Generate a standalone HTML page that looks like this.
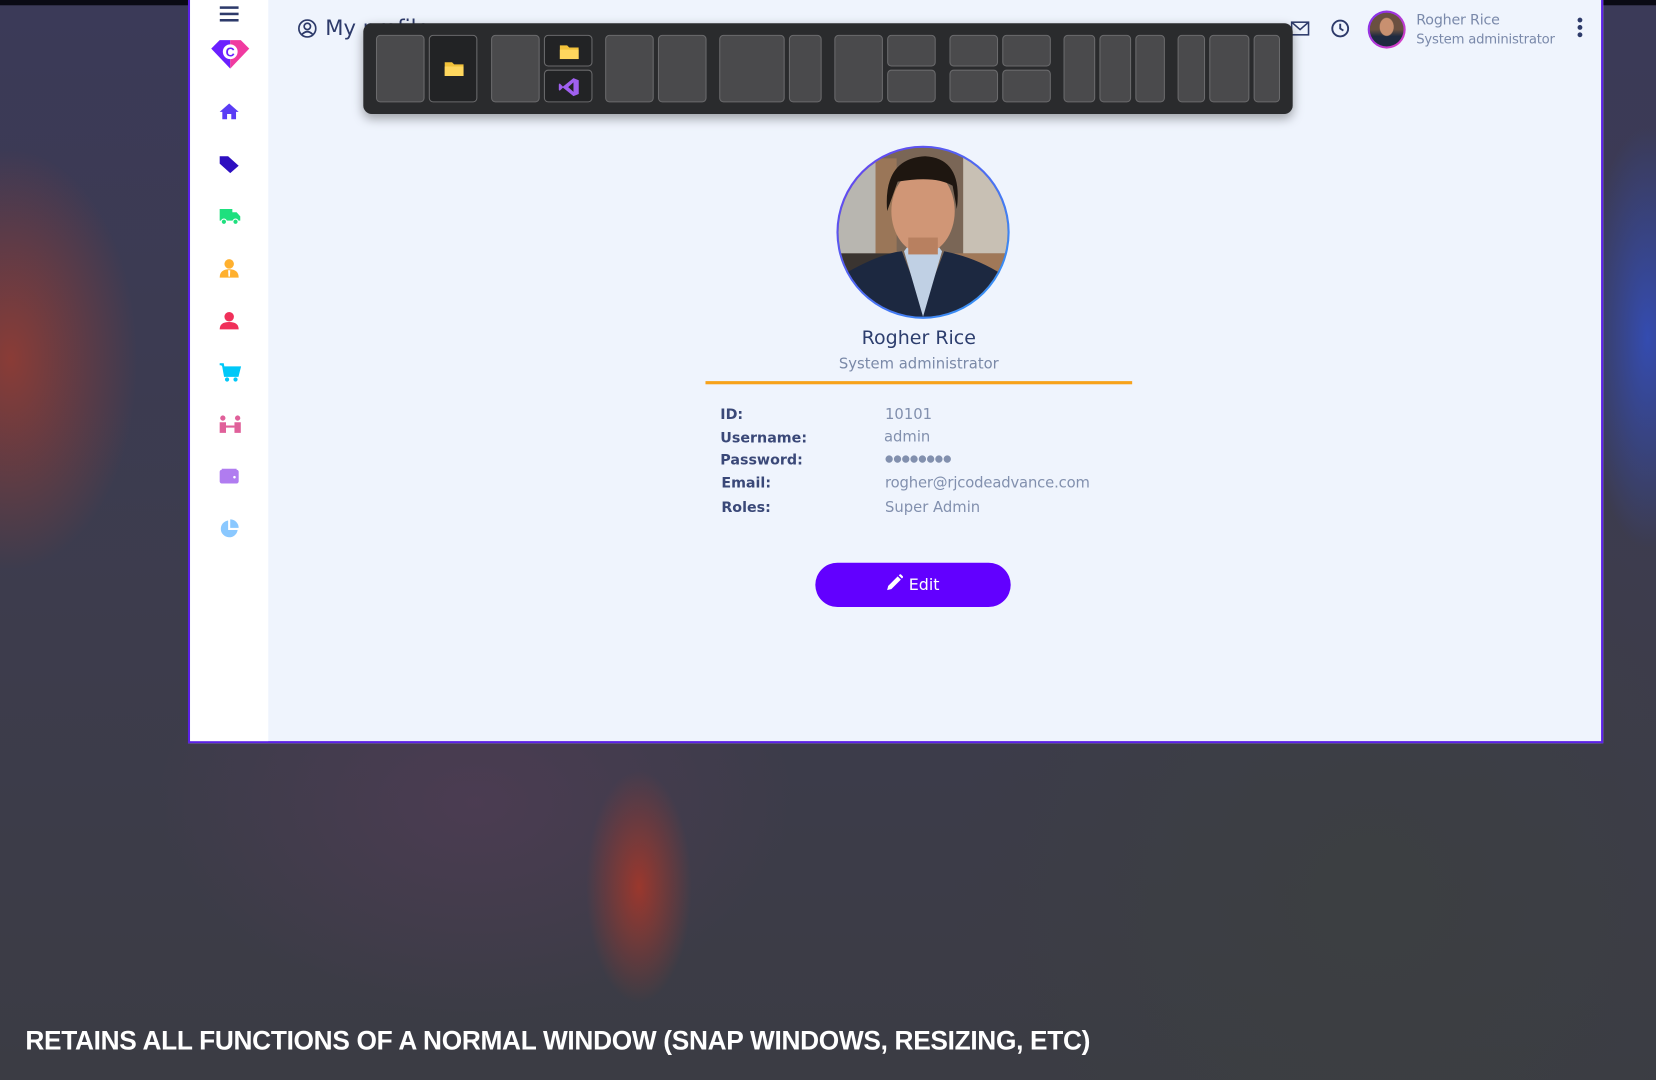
<!DOCTYPE html>
<html><head><meta charset="utf-8">
<style>
html,body{margin:0;padding:0;width:1656px;height:1080px;overflow:hidden;background:#3a3a47}
#s{position:absolute;left:0;top:0;width:1568px;height:1023px;transform:scale(1.05612,1.05572);transform-origin:0 0;font-family:"DejaVu Sans","Liberation Sans",sans-serif;
background:
radial-gradient(ellipse 120px 200px at 10px 340px,rgba(180,60,40,.65),transparent),
radial-gradient(ellipse 60px 200px at 1560px 320px,rgba(50,80,200,.8),transparent),
radial-gradient(ellipse 50px 110px at 605px 840px,rgba(170,55,40,.85),transparent),
radial-gradient(ellipse 300px 200px at 450px 760px,rgba(90,60,90,.5),transparent),
radial-gradient(ellipse 400px 400px at 1300px 850px,rgba(60,64,64,.8),transparent),
linear-gradient(180deg,#3b3a58 0%,#3d3c4c 60%,#3b3c44 100%);}
.win{position:absolute;left:178px;top:0;width:1336px;height:702px;border:2px solid #5b21e6;border-top:none;background:#eff4fd}
.side{position:absolute;left:0;top:0;width:74px;height:702px;background:#fff}
.ic{position:absolute;left:27px}
.pop{position:absolute;left:344px;top:22px;width:880px;height:86px;background:#2a2b2d;border-radius:8px;box-shadow:0 4px 10px rgba(0,0,0,.35)}
.t{position:absolute;background:#4a4a4c;border:1px solid #6a6a6c;border-radius:4px;box-sizing:border-box}
.d{background:#222325}
.lab{position:absolute;left:682px;font-weight:bold;font-size:13.5px;color:#3a4878;font-family:"DejaVu Sans",sans-serif}
.val{position:absolute;left:838px;font-size:14px;color:#8290ae}
</style></head><body><div id="s">
<div style="position:absolute;left:0;top:0;width:1568px;height:5px;background:#0a0a14"></div>
<div class="win">
 <div class="side">
  <svg class="ic" style="left:28px;top:5px" width="18" height="16" viewBox="0 0 18 16"><rect y="1" width="18" height="2.4" fill="#2d3a6a"/><rect y="7" width="18" height="2.4" fill="#2d3a6a"/><rect y="13" width="18" height="2.4" fill="#2d3a6a"/></svg>
  <svg style="position:absolute;left:18px;top:36px" width="40" height="30" viewBox="0 0 40 30"><path d="M2 10 L10 2 L20 2 L20 29 Z" fill="#6a1fff"/><path d="M38 10 L30 2 L20 2 L20 29 Z" fill="#f03aa0"/><circle cx="20" cy="13" r="7" fill="#fff"/><text x="20" y="17.5" text-anchor="middle" font-size="12" font-weight="bold" fill="#6a1fff" font-family="Liberation Sans">C</text></svg>
  <svg class="ic" style="top:97px" width="20" height="17" viewBox="0 0 20 17"><path d="M10 1 L19 9 L16.5 9 L16.5 16 L12 16 L12 11 L8 11 L8 16 L3.5 16 L3.5 9 L1 9 Z" fill="#5a3cf5"/></svg>
  <svg class="ic" style="top:147px" width="20" height="18" viewBox="0 0 20 18"><path d="M1 1 L9 1 L19 10 L11 17 L1 8 Z" fill="#2d0fc0"/></svg>
  <svg class="ic" style="top:197px" width="22" height="16" viewBox="0 0 22 16"><path d="M1 1 H13 V12 H1 Z M13 4 H17 L20.5 8 V12 H13 Z" fill="#1ee07e"/><circle cx="5" cy="13" r="2.5" fill="#1ee07e" stroke="#fff"/><circle cx="16" cy="13" r="2.5" fill="#1ee07e" stroke="#fff"/></svg>
  <svg class="ic" style="top:245px" width="20" height="19" viewBox="0 0 20 19"><circle cx="10" cy="5" r="4.5" fill="#ffb02e"/><path d="M1 18 Q1 10 10 10 Q19 10 19 18 Z" fill="#ffb02e"/><path d="M9 11 L11 11 L10.7 17 L9.3 17Z" fill="#fff"/></svg>
  <svg class="ic" style="top:295px" width="20" height="18" viewBox="0 0 20 18"><circle cx="10" cy="5" r="4.5" fill="#f0305a"/><path d="M1 17 Q1 10 10 10 Q19 10 19 17 Z" fill="#f0305a"/></svg>
  <svg class="ic" style="top:344px" width="22" height="18" viewBox="0 0 22 18"><path d="M1 1 H4 L6 12 H18 L20 4 H5" fill="#00c8f8" stroke="#00c8f8" stroke-width="2"/><circle cx="8" cy="15.5" r="2" fill="#00c8f8"/><circle cx="16" cy="15.5" r="2" fill="#00c8f8"/></svg>
  <svg class="ic" style="top:393px" width="22" height="18" viewBox="0 0 22 18"><circle cx="4" cy="3" r="2.5" fill="#e0609a"/><circle cx="18" cy="3" r="2.5" fill="#e0609a"/><path d="M1 7 H7 V17 H1Z M15 7 H21 V17 H15Z" fill="#e0609a"/><path d="M7 11 H15" stroke="#e0609a" stroke-width="2"/></svg>
  <svg class="ic" style="top:443px" width="20" height="16" viewBox="0 0 20 16"><rect x="1" y="2" width="18" height="13" rx="2" fill="#b07cf0"/><rect x="3" y="1" width="14" height="1.5" fill="#b07cf0"/><circle cx="15" cy="9" r="1.2" fill="#fff"/></svg>
  <svg class="ic" style="top:491px" width="20" height="20" viewBox="0 0 20 20"><path d="M9 2 A8 8 0 1 0 18 11 L9 11Z" fill="#8ac8ff"/><path d="M11 1 A8 8 0 0 1 19 9 L11 9Z" fill="#8ac8ff"/></svg>
 </div>
 <svg style="position:absolute;left:102px;top:18px" width="18" height="18" viewBox="0 0 18 18"><circle cx="9" cy="9" r="8" fill="none" stroke="#2d3a6a" stroke-width="1.6"/><circle cx="9" cy="7" r="3" fill="none" stroke="#2d3a6a" stroke-width="1.6"/><path d="M4 14.5 Q9 9.5 14 14.5" fill="none" stroke="#2d3a6a" stroke-width="1.6"/></svg>
 <div style="position:absolute;left:128px;top:14px;font-size:20px;color:#2d3a6a">My profile</div>
 <svg style="position:absolute;left:1042px;top:20px" width="18" height="14" viewBox="0 0 18 14"><rect x="1" y="1" width="16" height="12" fill="none" stroke="#2d3a6a" stroke-width="1.5"/><path d="M1 1 L9 8 L17 1" fill="none" stroke="#2d3a6a" stroke-width="1.5"/></svg>
 <svg style="position:absolute;left:1080px;top:18px" width="18" height="18" viewBox="0 0 18 18"><circle cx="9" cy="9" r="7.5" fill="none" stroke="#2d3a6a" stroke-width="1.8"/><path d="M9 4.5 V9 L12 11" fill="none" stroke="#2d3a6a" stroke-width="1.8"/></svg>
 <div style="position:absolute;left:1115px;top:10px;width:36px;height:36px;border-radius:50%;background:linear-gradient(135deg,#7a2ff0,#e040c0);"><div style="position:absolute;left:2px;top:2px;width:32px;height:32px;border-radius:50%;background:radial-gradient(ellipse 7px 9px at 50% 42%,#c89070 0 90%,transparent 100%),linear-gradient(180deg,#6a5040 0 50%,#1e2a40 70%)"></div></div>
 <div style="position:absolute;left:1161px;top:11px;font-size:13.5px;color:#7a89aa;line-height:17px;letter-spacing:-0.2px">Rogher Rice<br><span style="font-size:12.5px">System administrator</span></div>
 <svg style="position:absolute;left:1313px;top:16px" width="6" height="20" viewBox="0 0 6 20"><circle cx="3" cy="3" r="2.3" fill="#2d3a6a"/><circle cx="3" cy="10" r="2.3" fill="#2d3a6a"/><circle cx="3" cy="17" r="2.3" fill="#2d3a6a"/></svg>
</div>
<div class="pop">
 <div class="t" style="left:12px;top:11px;width:46px;height:64px"></div>
 <div class="t d" style="left:62px;top:11px;width:46px;height:64px"><svg style="position:absolute;left:14px;top:24px" width="18" height="14" viewBox="0 0 18 14"><path d="M0 1 H7 L9 3 H18 V14 H0Z" fill="#f2c23a"/><rect y="5" width="18" height="9" fill="#ffd75e"/></svg></div>
 <div class="t" style="left:121px;top:11px;width:46px;height:64px"></div>
 <div class="t d" style="left:171px;top:11px;width:46px;height:30px"><svg style="position:absolute;left:14px;top:8px" width="18" height="14" viewBox="0 0 18 14"><path d="M0 1 H7 L9 3 H18 V14 H0Z" fill="#f2c23a"/><rect y="5" width="18" height="9" fill="#ffd75e"/></svg></div>
 <div class="t d" style="left:171px;top:44px;width:46px;height:31px"><svg style="position:absolute;left:13px;top:6px" width="20" height="19" viewBox="0 0 20 19"><path d="M14 1 L19 3 V16 L14 18 L4 10 L1 13 L0 12 V7 L1 6 L4 9 Z M14 5 L9 9.5 L14 14Z" fill="#a060f0"/></svg></div>
 <div class="t" style="left:229px;top:11px;width:46px;height:64px"></div>
 <div class="t" style="left:279px;top:11px;width:46px;height:64px"></div>
 <div class="t" style="left:337px;top:11px;width:62px;height:64px"></div>
 <div class="t" style="left:403px;top:11px;width:31px;height:64px"></div>
 <div class="t" style="left:446px;top:11px;width:46px;height:64px"></div>
 <div class="t" style="left:496px;top:11px;width:46px;height:30px"></div>
 <div class="t" style="left:496px;top:44px;width:46px;height:31px"></div>
 <div class="t" style="left:555px;top:11px;width:46px;height:30px"></div>
 <div class="t" style="left:555px;top:44px;width:46px;height:31px"></div>
 <div class="t" style="left:605px;top:11px;width:46px;height:30px"></div>
 <div class="t" style="left:605px;top:44px;width:46px;height:31px"></div>
 <div class="t" style="left:663px;top:11px;width:30px;height:64px"></div>
 <div class="t" style="left:697px;top:11px;width:30px;height:64px"></div>
 <div class="t" style="left:731px;top:11px;width:28px;height:64px"></div>
 <div class="t" style="left:771px;top:11px;width:26px;height:64px"></div>
 <div class="t" style="left:801px;top:11px;width:38px;height:64px"></div>
 <div class="t" style="left:843px;top:11px;width:25px;height:64px"></div>
</div>
<div style="position:absolute;left:792px;top:138px;width:164px;height:164px;border-radius:50%;background:linear-gradient(135deg,#6a3cf0,#2f9cf5)">
 <svg style="position:absolute;left:2px;top:2px" width="160" height="160" viewBox="0 0 160 160"><defs><clipPath id="c"><circle cx="80" cy="80" r="80"/></clipPath></defs><g clip-path="url(#c)">
 <rect width="160" height="160" fill="#7a6656"/><rect x="0" y="0" width="40" height="100" fill="#b8b6b0"/><rect x="35" y="10" width="20" height="100" fill="#9a7658"/><rect x="118" y="0" width="42" height="100" fill="#c8c0b4"/><rect x="100" y="100" width="60" height="40" fill="#a07858"/><rect x="0" y="100" width="60" height="40" fill="#3a3430"/>
 <path d="M0 160 L8 118 Q40 100 60 98 L80 150 L100 98 Q130 104 155 120 L160 160Z" fill="#1c2840"/>
 <path d="M62 98 L80 160 L98 98 L92 90 H68Z" fill="#c0d0e4"/>
 <ellipse cx="80" cy="60" rx="30" ry="40" fill="#d09676"/><rect x="66" y="85" width="28" height="16" fill="#b88060"/>
 <path d="M46 60 Q42 10 82 8 Q118 10 112 58 L108 36 Q92 26 56 32 Z" fill="#1e1610"/>
 </g></svg>
</div>
<div style="position:absolute;left:670px;top:310px;width:400px;text-align:center;font-size:18px;color:#2d3e6e">Rogher Rice</div>
<div style="position:absolute;left:670px;top:337px;width:400px;text-align:center;font-size:14px;color:#7a89a8">System administrator</div>
<div style="position:absolute;left:668px;top:361px;width:404px;height:3px;background:#f7a21b"></div>
<div class="lab" style="top:385px">ID:</div><div class="val" style="top:385px">10101</div>
<div class="lab" style="top:407px">Username:</div><div class="val" style="top:406px;left:837px">admin</div>
<div class="lab" style="top:428px">Password:</div><div class="val" style="top:430px;font-size:9px;letter-spacing:0px">●●●●●●●●</div>
<div class="lab" style="top:450px;left:683px">Email:</div><div class="val" style="top:450px;letter-spacing:-0.15px">rogher@rjcodeadvance.com</div>
<div class="lab" style="top:473px;left:683px">Roles:</div><div class="val" style="top:473px">Super Admin</div>
<div style="position:absolute;left:772px;top:533px;width:185px;height:42px;border-radius:21px;background:#6200ff;color:#fff;font-size:15px;line-height:42px;text-align:center"><svg width="16" height="16" viewBox="0 0 16 16" style="vertical-align:-1px;margin-right:5px"><path d="M1 15 L2 11 L11 2 L14 5 L5 14Z M12 1 L13.5 -0.5 L16.5 2.5 L15 4Z" fill="#fff"/></svg>Edit</div>
<div style="position:absolute;left:24px;top:972px;font-family:'Liberation Sans',sans-serif;font-weight:bold;font-size:25px;color:#fff;white-space:nowrap;transform:scaleX(0.995);transform-origin:0 0;letter-spacing:-0.3px">RETAINS ALL FUNCTIONS OF A NORMAL WINDOW (SNAP WINDOWS, RESIZING, ETC)</div>
</div></body></html>
